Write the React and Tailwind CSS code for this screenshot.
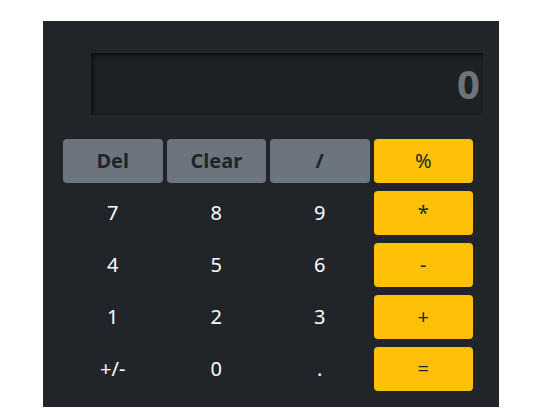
import React from 'react'

const rows = [
  [['Del', 'gray'], ['Clear', 'gray'], ['/', 'gray'], ['%', 'yellow']],
  [['7'], ['8'], ['9'], ['*', 'yellow']],
  [['4'], ['5'], ['6'], ['-', 'yellow']],
  [['1'], ['2'], ['3'], ['+', 'yellow']],
  [['+/-'], ['0'], ['.'], ['=', 'yellow']],
]

const styles = {
  gray: 'bg-[#6c757d] text-[#212529] font-bold rounded-[4px]',
  yellow: 'bg-[#ffc107] text-[#212529] rounded-[4px]',
  plain: 'bg-transparent text-white',
}

export default function App() {
  return (
    <div className="min-h-[411px] bg-white font-['Noto_Sans','Open_Sans',sans-serif]">
      <div className="ml-[43px] pt-[21px] w-[456px]">
        <div className="bg-[#212529] pt-[32px] pb-[16px]">
          <div className="ml-[48px] mr-[16px] h-[62px] bg-[#1e2124] shadow-[inset_2px_3px_4px_rgba(0,0,0,0.6)] flex items-center justify-end pr-[3px]">
            <span className="text-[40px] font-bold text-[#6c757d] leading-none">0</span>
          </div>
          <div className="ml-[20px] mt-[24px] w-[410px] grid grid-cols-4 gap-x-[4px] gap-y-[8px] auto-rows-[44px]">
            {rows.flat().map(([label, kind], i) => (
              <button
                key={i}
                className={`flex items-center justify-center text-[20px] ${styles[kind || 'plain']}`}
              >
                {label}
              </button>
            ))}
          </div>
        </div>
      </div>
    </div>
  )
}
